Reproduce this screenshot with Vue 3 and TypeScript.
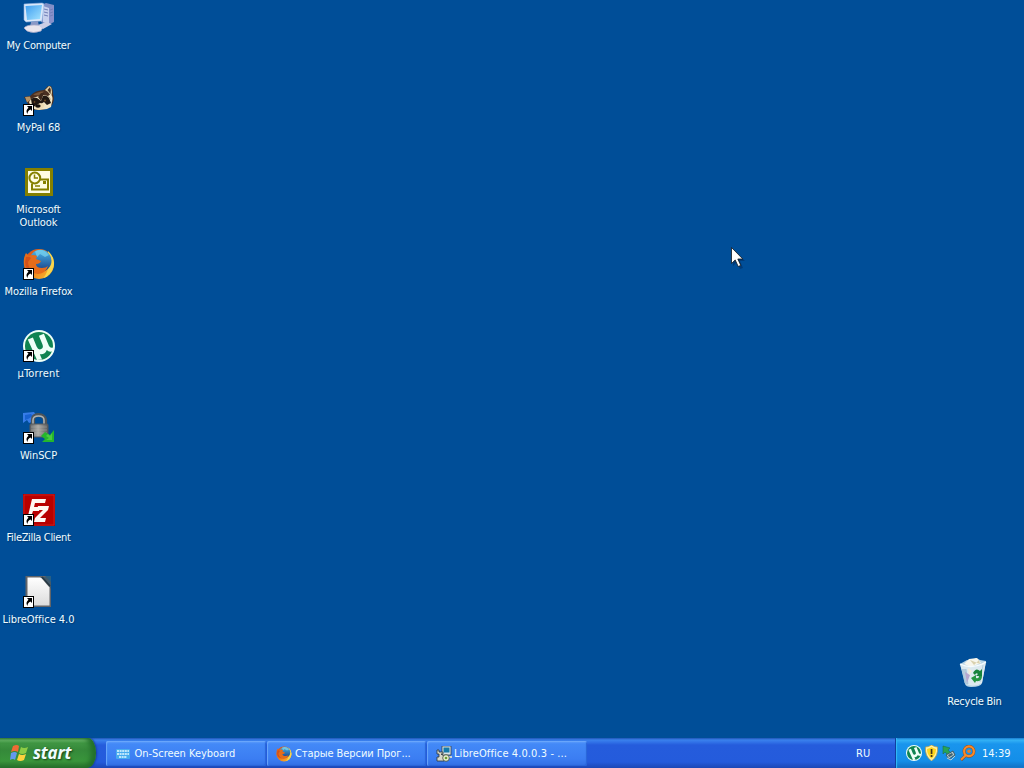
<script setup lang="ts">
interface Shortcut {
  id: string
  label: string
  x: number
  y: number
  linked: boolean
  spacing: number
}

const shortcuts: Shortcut[] = [
  { id: 'computer', label: 'My Computer', x: 0, y: 2, linked: false, spacing: -0.25 },
  { id: 'mypal', label: 'MyPal 68', x: 0, y: 84, linked: true, spacing: -0.1 },
  { id: 'outlook', label: 'Microsoft\nOutlook', x: 0, y: 166, linked: false, spacing: -0.08 },
  { id: 'firefox', label: 'Mozilla Firefox', x: 0, y: 248, linked: true, spacing: -0.13 },
  { id: 'utorrent', label: 'µTorrent', x: 0, y: 330, linked: true, spacing: 0.2 },
  { id: 'winscp', label: 'WinSCP', x: 0, y: 412, linked: true, spacing: -0.1 },
  { id: 'filezilla', label: 'FileZilla Client', x: 0, y: 494, linked: true, spacing: -0.34 },
  { id: 'libreoffice', label: 'LibreOffice 4.0', x: 0, y: 576, linked: true, spacing: -0.03 },
  { id: 'bin', label: 'Recycle Bin', x: 936, y: 658, linked: false, spacing: -0.25 },
]

const tasks = [
  { id: 'keyboard', label: 'On-Screen Keyboard', spacing: -0.03 },
  { id: 'firefox', label: 'Старые Версии Прог...', spacing: -0.07 },
  { id: 'installer', label: 'LibreOffice 4.0.0.3 - ...', spacing: 0.1 },
]
</script>

<template>
  <div class="screen">
    <svg class="defs" width="0" height="0">
      <defs>
        <linearGradient id="glass" x1="0" y1="0" x2="1" y2="1">
          <stop offset="0" stop-color="#3d9df0" /><stop offset="1" stop-color="#a4e4ff" />
        </linearGradient>
        <linearGradient id="flame" x1="0" y1="0" x2="1" y2="1">
          <stop offset="0" stop-color="#d94a16" /><stop offset=".5" stop-color="#ee7b18" /><stop offset="1" stop-color="#f9c637" />
        </linearGradient>
        <linearGradient id="globe" x1="0" y1="0" x2="0" y2="1">
          <stop offset="0" stop-color="#4bb6e8" /><stop offset="1" stop-color="#143d86" />
        </linearGradient>
        <linearGradient id="metal" x1="0" y1="0" x2="1" y2="0">
          <stop offset="0" stop-color="#66686a" /><stop offset=".45" stop-color="#aaa9a5" /><stop offset="1" stop-color="#5c5d5e" />
        </linearGradient>
        <linearGradient id="paper" x1="0" y1="0" x2="0" y2="1">
          <stop offset="0" stop-color="#fff" /><stop offset="1" stop-color="#dcdcdc" />
        </linearGradient>
        <symbol id="fox" viewBox="0 0 32 32">
          <circle cx="16" cy="16" r="15" fill="url(#flame)" />
          <path d="M25 3q8 7 5.500 16-3 9-10 11 5-7 5-14z" fill="#f9d64c" />
          <circle cx="17.5" cy="12.8" r="11" fill="url(#globe)" />
          <path d="M12 3.500q8-4 14 3.500l-4 2-5-3-3 3z" fill="#78d2ef" opacity=".75" />
          <path d="M3 5l3 3q4-2 8 0l-1 3 5 2q-1 3-5 3 0 4 6 4 4 0 6-2-2 7-10 8Q3 25 1 17q-1-7 2-12z" fill="#e56c1b" />
          <path d="M3 9q3-1 5 1l-3 4q0 7 7 11Q2 23 2 14z" fill="#c94318" opacity=".65" />
        </symbol>
        <symbol id="mu" viewBox="0 0 32 32">
          <circle cx="16" cy="16" r="16" fill="#effff7" />
          <circle cx="16" cy="16" r="14" fill="#108451" />
          <path d="M4.8 9.5l5.1-2 3.8 9.3q1.6 3.6 4.5 2.3 2.7-1.2 1.2-4.8l-3.5-8.5 5-2 5 12q1.4 2.6 4 1.6l.5 3.5q-4 2-6.6-.9-2 5-7 4.2l2.3 5.4-5.1.3z" fill="#effff7" />
        </symbol>
      </defs>
    </svg>

    <main class="desktop">
      <div
        v-for="item in shortcuts"
        :key="item.id"
        class="shortcut"
        :style="{ left: item.x + 'px', top: item.y + 'px' }"
      >
        <svg class="icon" viewBox="0 0 32 32">
          <g v-if="item.id === 'computer'">
            <path d="M18 3l5-2 8 2v17l-6 3-7-3z" fill="#7f8fc6" />
            <path d="M20 4l6 2v16l-6-2z" fill="#c7d0ed" />
            <path d="M26 6l5-2v15l-5 3z" fill="#8790ca" />
            <path d="M21 7l4 1m-4 2l4 1m-4 2l4 1m2-6l3-1m-3 4l3-1m-3 4l3-1" stroke="#7180b8" />
            <path d="M1 2L19 1q2 0 2 2l-2 16L3 20 1 18z" fill="#dae8fa" stroke="#8aaddd" stroke-width=".6" />
            <path d="M2.500 4l16.500-1-2 14-13 1z" fill="url(#glass)" />
            <path d="M8 20l7-1 1 6H7z" fill="#8998c6" />
            <path d="M1 26q2-3 10-3t9 2l-2 4q-8 3-14 0z" fill="#e9e5ed" stroke="#a9a9c8" stroke-width=".7" />
            <path d="M15 23l8-3 6 2-9 5z" fill="#cbcde5" />
          </g>
          <g v-else-if="item.id === 'mypal'">
            <path d="M1 13l6-1q5-6 14-6l4-4 3 0q2 3 2 8 2 6-1 11-4 5-14 5Q7 26 5 20z" fill="#4a3022" />
            <path d="M22 6l4-4 2 1q2 5 0 9l-3-4z" fill="#e2d2a9" />
            <path d="M24.500 6l2.500-3q1.500 3 .5 7z" fill="#493021" />
            <path d="M2 13l5-.5 1 3-4 3z" fill="#b69263" />
            <path d="M10 11q5-4 11-3.500l-5 4z" fill="#795538" />
            <path d="M6 18q2-4 7-5 6-3 12-1l4 5-1 6-4 2-8 1q-8 0-10-8z" fill="#f0e5c5" />
            <path d="M8 15q3-2 6-1l4 3 2-5q4-1 6 2l2 5-4 2-3-3-3 2-3 4-6-3z" fill="#211812" />
            <path d="M18 9l3 0-3 8-3-4z" fill="#3d281c" />
            <path d="M12 22l5-3 5 1-2 4-5 2z" fill="#eddbb1" />
            <ellipse cx="15" cy="22" rx="2.700" ry="1.700" fill="#17120f" />
            <circle cx="22" cy="16.500" r="1" fill="#6c4a22" /><circle cx="11.500" cy="18" r=".8" fill="#80592d" />
            <path d="M25 12q4 3 3 8 3-5 0-10z" fill="#f4e8c7" />
          </g>
          <g v-else-if="item.id === 'outlook'">
            <path d="M2 2h28v28H2z" fill="#858000" />
            <path d="M5 5h22v22H5z" fill="#fffde4" />
            <path d="M14.500 13.500H25v10H9v-6" fill="none" stroke="#858000" stroke-width="2" />
            <circle cx="11.800" cy="12" r="5.400" fill="#fffde4" stroke="#858000" stroke-width="2" />
            <path d="M11.500 8.500V12H15M12 20h5" fill="none" stroke="#858000" stroke-width="1.500" />
            <path d="M20 15h3v3h-3z" fill="#858000" />
          </g>
          <use v-else-if="item.id === 'firefox'" href="#fox" />
          <use v-else-if="item.id === 'utorrent'" href="#mu" />
          <g v-else-if="item.id === 'winscp'">
            <path d="M0 1l11-1 2 3-3 2 2 4-6 2-2-3-4 3z" fill="#367ce8" />
            <path d="M2 3l6-1 2 2-5 3-3 1z" fill="#1862d1" />
            <path d="M10 15V8q0-5 5.500-5T22 8v7" fill="none" stroke="#4d5459" stroke-width="4.200" />
            <path d="M10 15V8q0-4 5.500-4T21 8v7" fill="none" stroke="#b1b5b6" stroke-width="1.500" />
            <rect x="7" y="12" width="18" height="13" rx="1" fill="url(#metal)" stroke="#55585c" />
            <path d="M8 15h16M8 18h16M8 21h16" stroke="#c2c0b8" opacity=".35" />
            <path d="M31 18v12H19l3-3-4-3 4-4 5 3z" fill="#24b62c" />
            <path d="M29 21v7h-6l3-2-3-2 2-2 2 2z" fill="#58d548" opacity=".7" />
          </g>
          <g v-else-if="item.id === 'filezilla'">
            <path d="M0 0h32v32H0z" fill="#b80000" />
            <path d="M1 1h30v30H1z" fill="none" stroke="#cf2a25" stroke-width=".7" />
            <path d="M9 5h14l-1 4H12l-1 4h6l-1 4h-6l-3 9H4z" fill="#fff7f2" />
            <path d="M15 12h11l-1 4-8 8h6l-1 4H11l1-4 8-8h-6z" fill="#fff7f2" />
          </g>
          <g v-else-if="item.id === 'libreoffice'">
            <path d="M2.500 0H28v31H2.500z" fill="#626468" />
            <path d="M4.500 1.500H18l8.500 10v18h-22z" fill="url(#paper)" />
            <path d="M17 1h11v12q-4-8-11-12z" fill="#43596a" />
            <path d="M19 1l8 9" stroke="#263943" stroke-width="1.500" />
            <path d="M22 0h6v6z" fill="#285f83" />
          </g>
          <g v-else transform="translate(-3 0)">
            <path d="M4 6l7-4 4 1 5-3 4 2 6 1-4 22q-1 4-11 4-5 0-6-3z" fill="#b9d5e6" />
            <path d="M4 6q13 6 26-2l-4 21q-8 5-16 1z" fill="#dce9ef" />
            <path d="M8 6l5-5 8-1 4 5-10 4z" fill="#f7f6ed" />
            <path d="M14 2l4 5 5-5 1 4" fill="#d9d1af" />
            <path d="M6 11l3 14 3 1-2-15M27 7l-3 17" fill="#b4cbdc" stroke="#a3c2d5" stroke-width=".7" />
            <path d="M9 14l5 3-3 8z" fill="#b6a6cf" />
            <path d="M12 10l4 3-3 4z" fill="#f7ead7" />
            <path d="M17 15q3-6 7-2l2-2v7h-6l2-2q-2-2-3 1z" fill="#16823c" />
            <path d="M26 18q0 6-6 5l-1 2-4-5 5-3v3q3 1 3-2z" fill="#249642" />
            <path d="M4 6q12 6 26-2" fill="none" stroke="#f5fcff" stroke-width="1.300" />
          </g>
          <g v-if="item.linked">
            <path d="M0 20h11v12H0z" fill="#000" />
            <path d="M1 21h9v10H1z" fill="#fff" />
            <path d="M4 22h5v5l-1.500-1.500q-3 1-3 4.500Q2 26.500 5.500 23.700z" fill="#000" />
          </g>
        </svg>
        <span class="label" :style="{ letterSpacing: item.spacing + 'px' }">{{ item.label }}</span>
      </div>

      <svg class="pointer" viewBox="0 0 14 22">
        <path d="M2 2v17l4-4 3 7 3-1-3-7h5z" fill="#00204a" opacity=".4" />
        <path d="M.5.5v16l3.700-3.600 3 6.600 2.600-1.100-3-6.400h5z" fill="#fff" stroke="#101820" stroke-width=".8" />
      </svg>
    </main>

    <footer class="taskbar">
      <button class="start">
        <svg class="flag" viewBox="0 0 18 18">
          <path d="M3 2q4-2 6 0L8 8Q5 6 1 8z" fill="#ef6b35" />
          <path d="M11 3q3 2 7 0l-2 6q-4 2-7 0z" fill="#8dcc45" />
          <path d="M1 9q4-2 6 0l-2 7q-2-2-5 0z" fill="#6499ee" />
          <path d="M9 10q3 2 7 0l-2 6q-4 2-7 0z" fill="#ffd23d" />
        </svg>
        <span>start</span>
      </button>
      <nav class="tasks">
        <button v-for="task in tasks" :key="task.id" class="task">
          <svg class="small" viewBox="0 0 16 16">
            <g v-if="task.id === 'keyboard'">
              <rect x="1" y="3" width="14" height="10" rx="1" fill="#48abef" />
              <path d="M2 5h12M2 8h12M4 11h8" stroke="#e6fcff" stroke-width="1.700" stroke-dasharray="2 .6" />
            </g>
            <use v-else-if="task.id === 'firefox'" href="#fox" width="16" height="16" />
            <g v-else>
              <path d="M6 0h9v9H6z" fill="#d8e2e8" stroke="#263238" stroke-width=".7" />
              <path d="M7.500 1.500h6v5h-6z" fill="#147aaa" />
              <path d="M6 10h10v2H6z" fill="#cbd4d4" />
              <path d="M1 4h2v2h4v2H5l3 2v5H1v-4h2V8H1z" fill="#d8d7cb" stroke="#2b3539" stroke-width=".8" />
              <circle cx="10" cy="12" r="3.300" fill="#e8eed0" stroke="#454c37" stroke-width=".8" />
              <circle cx="10" cy="12" r="1.300" fill="#6a9d35" />
            </g>
          </svg>
          <span :style="{ letterSpacing: task.spacing + 'px' }">{{ task.label }}</span>
        </button>
      </nav>
      <span class="language">RU</span>
      <aside class="tray">
        <svg class="small" viewBox="0 0 16 16"><use href="#mu" width="16" height="16" /></svg>
        <svg class="small" viewBox="0 0 16 16">
          <path d="M7.500 0q3 2 6 2 1 9-6 14Q.5 11 1.500 2q3 0 6-2z" fill="#fff0a0" stroke="#b99a45" stroke-width=".7" />
          <path d="M7.500 2q2 1.500 4.500 2 0 6-4.500 9.500Q3 10 3 4 5.500 3.500 7.500 2z" fill="#ffd51e" />
          <path d="M6.700 4h1.700v5H6.700zM6.700 10h1.700v2H6.700z" fill="#44351b" />
        </svg>
        <svg class="small" viewBox="0 0 16 16">
          <path d="M1 1l7 2-2 2 3 3-3 2-3-3-2 2z" fill="#27a455" stroke="#1c704f" stroke-width=".6" />
          <path d="M4 10l7-4 2 4-6 4z" fill="#b7c8cd" stroke="#3d5c67" />
          <path d="M6 10l4-2 1 2-4 2z" fill="#41646f" />
          <path d="M5 13l4 2 4-4" fill="none" stroke="#b6ced6" />
        </svg>
        <svg class="small" viewBox="0 0 16 16">
          <circle cx="9" cy="6.300" r="4.900" fill="none" stroke="#934719" stroke-width="3" />
          <path d="M1 15l5-5" stroke="#934719" stroke-width="3" />
          <circle cx="9" cy="6.300" r="4.900" fill="none" stroke="#f78a2a" stroke-width="2.200" />
          <path d="M1 14.800L6 10" stroke="#f78a2a" stroke-width="2" />
          <circle cx="9" cy="6.300" r="1.700" fill="#ed7c24" />
        </svg>
        <time>14:39</time>
      </aside>
    </footer>
  </div>
</template>

<style>
html, body { margin: 0; overflow: hidden; }
</style>

<style scoped>
.screen {
  width: 1024px;
  height: 768px;
  display: flex;
  flex-direction: column;
  position: relative;
  background: #004e98;
  color: #effcff;
  font: 11px/13px "DejaVu Sans Condensed", "DejaVu Sans", sans-serif;
  font-stretch: condensed;
  overflow: hidden;
}
.defs { position: absolute; }
.desktop { flex: 1; position: relative; }
.shortcut {
  position: absolute;
  width: 77px;
  display: flex;
  flex-direction: column;
  align-items: center;
}
.icon { width: 32px; height: 32px; margin-left: 1px; }
.label {
  margin-top: 5px;
  text-align: center;
  white-space: pre;
  text-shadow: 1px 1px 1px #003b75;
}
.pointer { position: absolute; left: 731px; top: 247px; width: 14px; height: 22px; }
.taskbar {
  height: 30px;
  display: flex;
  align-items: stretch;
  background: linear-gradient(#1f55b6 0, #3a81ed 2px, #3273e8 4px, #255cdc 7px, #245bdc 24px, #1c47b5 30px);
}
button { border: 0; margin: 0; color: inherit; font: inherit; }
.start {
  width: 96px;
  box-sizing: border-box;
  padding: 0 0 0 10px;
  display: flex;
  align-items: center;
  gap: 5px;
  border-radius: 0 8px 9px 0 / 0 15px 15px 0;
  background: linear-gradient(#3a8342 0, #69b668 2px, #409643 5px, #35893a 12px, #39953b 23px, #276f2c 30px);
  box-shadow: inset -5px 0 5px #23702a, 1px 0 2px #153b9c;
  font: italic bold 17px/20px "Open Sans", "DejaVu Sans", sans-serif;
  letter-spacing: -0.2px;
  text-shadow: 1px 1px 2px #173f16;
}
.flag { width: 18px; height: 18px; }
.tasks { flex: 1; display: flex; align-items: center; gap: 1px; padding: 1px 0 0 10px; }
.task {
  width: 159.5px;
  height: 25px;
  box-sizing: border-box;
  padding: 0 0 0 9px;
  display: flex;
  align-items: center;
  gap: 3.500px;
  border-radius: 2px;
  background: linear-gradient(#5d9cfb 0, #4389f7 3px, #3b7df2 18px, #316fe4 25px);
  box-shadow: inset 1px 1px 1px #6ba8fb, inset -1px -1px 1px #2864d8;
  white-space: nowrap;
}
.task:last-child { gap: 2px; }
.small { width: 16px; height: 16px; flex: none; }
.language { width: 39px; line-height: 31px; }
.tray {
  width: 129px;
  box-sizing: border-box;
  border-left: 1px solid #103f9f;
  padding-left: 10px;
  display: flex;
  align-items: center;
  gap: 2px;
  background: linear-gradient(#1673ca 0, #34b2f5 2px, #1995ed 6px, #148ee8 23px, #126fc2 30px);
  box-shadow: inset 1px 0 1px #34bdf8;
}
.tray time { margin-left: 4px; }
</style>
